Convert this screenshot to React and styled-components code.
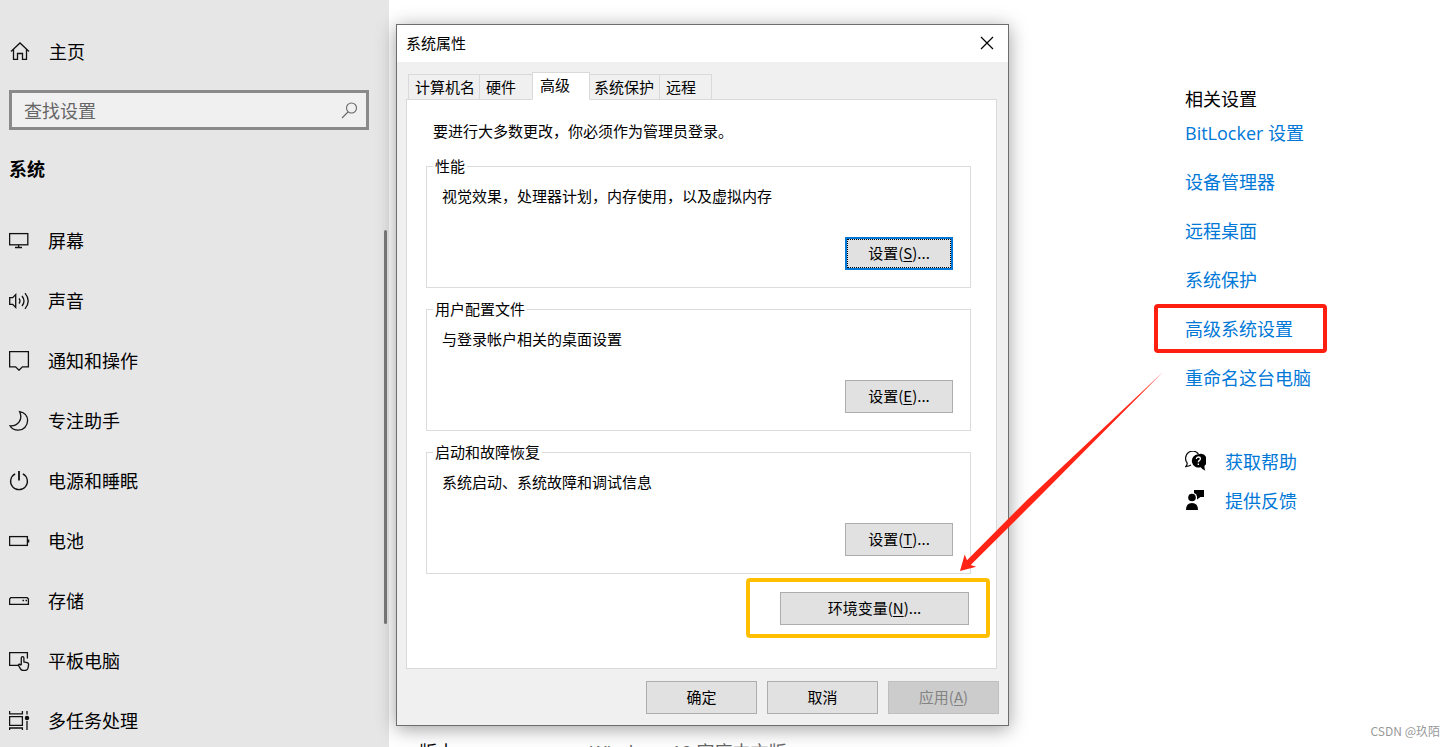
import React from "react";
import styled, { createGlobalStyle, css } from "styled-components";

const GlobalStyle = createGlobalStyle`
  * { box-sizing: border-box; }
  body {
    margin: 0;
    background: #fff;
    color: #000;
    font-family: "Noto Sans CJK SC", "Liberation Sans", sans-serif;
    font-size: 18px;
    line-height: 24px;
  }
  button, input { font-family: inherit; }
`;

const Desktop = styled.div`
  position: relative;
  display: flex;
  height: 100vh;
  overflow: hidden;
`;

/* ---------- Settings: left navigation ---------- */

const Sidebar = styled.aside`
  position: relative;
  display: flex;
  flex-direction: column;
  flex: none;
  width: 389px;
  padding: 31px 20px 0 9px;
  background: #e6e6e6;
  overflow: hidden;
`;

const HomeLink = styled.a`
  display: flex;
  align-items: center;
  flex: none;
  gap: 19px;
  height: 40px;
  color: #000;
  text-decoration: none;
`;

const SearchBox = styled.label`
  display: flex;
  align-items: center;
  flex: none;
  height: 40px;
  margin-top: 19px;
  padding: 0 6px 0 12px;
  border: 3px solid #8a8a8a;
  background: #f0f0f0;
`;

const SearchInput = styled.input`
  flex: 1;
  min-width: 0;
  padding: 0;
  border: 0;
  outline: 0;
  background: transparent;
  font-size: 18px;
  line-height: 24px;
  &::placeholder { color: #666; opacity: 1; }
`;

const SectionTitle = styled.h2`
  margin: 26px 0 30px;
  font-size: 18px;
  line-height: 24px;
  font-weight: 700;
`;

const NavList = styled.ul`
  margin: 0;
  padding: 0;
  list-style: none;
`;

const NavLink = styled.a`
  display: flex;
  align-items: center;
  gap: 18px;
  height: 60px;
  color: #000;
  text-decoration: none;
`;

const ScrollThumb = styled.div`
  position: absolute;
  top: 230px;
  right: 2px;
  width: 3px;
  height: 394px;
  border-radius: 2px;
  background: #7a7a7a;
`;

const Icon = styled.svg`
  flex: none;
  display: block;
  width: 21px;
  height: 22px;
  fill: none;
  stroke: ${(p) => p.$stroke || "#111"};
  stroke-width: ${(p) => p.$weight || 1.3};
`;

/* ---------- Settings: main page ---------- */

const Main = styled.main`
  flex: 1;
  display: flex;
  min-width: 0;
  font-family: "Open Sans", "Noto Sans CJK SC", sans-serif;
`;

const SpecColumn = styled.section`
  flex: none;
  display: flex;
  flex-direction: column;
  justify-content: flex-end;
  width: 796px;
  padding-left: 30px;
`;

const SpecRow = styled.dl`
  display: grid;
  grid-template-columns: 171px 1fr;
  margin: 0 0 -17px;
  dd { margin: 0; color: #666; }
`;

const Related = styled.aside`
  flex: 1;
  min-width: 0;
  padding-top: 87px;
`;

const RelatedTitle = styled.h3`
  margin: 0;
  font-size: 18px;
  line-height: 24px;
  font-weight: 400;
`;

const RelatedList = styled.ul`
  display: flex;
  flex-direction: column;
  gap: 25px;
  margin: 10px 0 0;
  padding: 0;
  list-style: none;
`;

const RelatedItem = styled.li`
  position: relative;
  height: 24px;
`;

const TextLink = styled.a`
  color: #0078d7;
  text-decoration: none;
`;

const HelpList = styled.ul`
  display: flex;
  flex-direction: column;
  gap: 15px;
  margin: 60px 0 0;
  padding: 0;
  list-style: none;
`;

const HelpItem = styled.li`
  display: flex;
  align-items: center;
  gap: 19px;
  height: 24px;
`;

/* ---------- Marks drawn over the windows ---------- */

const mark = css`
  position: absolute;
  border-radius: 4px;
  pointer-events: none;
`;

const RedMark = styled.div`
  ${mark}
  inset: -13px auto auto -31px;
  width: 173px;
  height: 49px;
  border: 4px solid #ff1f10;
`;

const YellowMark = styled.div`
  ${mark}
  inset: -14px -21px -13px -34px;
  border: 4px solid #ffbf00;
`;

const Arrow = styled.svg`
  position: absolute;
  left: 950px;
  top: 363px;
  width: 220px;
  height: 220px;
  pointer-events: none;
`;

/* ---------- System properties dialog ---------- */

const Dialog = styled.section`
  position: absolute;
  left: 396px;
  top: 24px;
  width: 613px;
  border: 1px solid #6d6d6d;
  background: #f0f0f0;
  box-shadow: 0 3px 18px rgba(0, 0, 0, 0.38);
  font-size: 15px;
  line-height: 20px;
`;

const TitleBar = styled.header`
  display: flex;
  align-items: center;
  justify-content: space-between;
  height: 37px;
  padding: 0 12px 2px 9px;
  background: #fff;
`;

const DialogTitle = styled.h1`
  margin: 0;
  font-size: 15px;
  line-height: 20px;
  font-weight: 400;
`;

const CloseButton = styled.button`
  display: flex;
  padding: 2px;
  border: 0;
  background: transparent;
  svg { width: 14px; height: 14px; }
`;

const DialogBody = styled.div`
  padding: 10px 11px 11px 9px;
`;

const Tabs = styled.div`
  display: flex;
  align-items: flex-end;
  height: 28px;
  margin-bottom: -1px;
  padding-left: 2px;
`;

const Tab = styled.button`
  width: ${(p) => p.$width}px;
  height: 26px;
  padding: 0 0 0 6px;
  border: 1px solid #d9d9d9;
  border-right: 0;
  background: #f0f0f0;
  color: #000;
  font-size: 15px;
  line-height: 20px;
  text-align: left;
  white-space: nowrap;
  ${(p) => p.$last && css`border-right: 1px solid #d9d9d9;`}
  ${(p) => p.$afterActive && css`
    padding-left: 4px;
    border-left: 0;
  `}
  ${(p) => p.$active && css`
    height: 28px;
    padding: 0 0 2px 7px;
    border-right: 1px solid #d9d9d9;
    border-bottom-color: #fff;
    background: #fff;
  `}
`;

const TabPanel = styled.div`
  height: 570px;
  padding: 21px 25px 0 19px;
  border: 1px solid #d9d9d9;
  background: #fff;
`;

const Notice = styled.p`
  margin: 0 0 15px 7px;
`;

const Groups = styled.div`
  display: flex;
  flex-direction: column;
  gap: 11px;
`;

const Group = styled.fieldset`
  height: 132px;
  min-width: 0;
  margin: 0;
  padding: 10px 17px 17px 15px;
  border: 1px solid #dcdcdc;
`;

const Legend = styled.legend`
  margin-left: -9px;
  padding: 0 2px;
  line-height: 20px;
`;

const GroupText = styled.p`
  margin: 0;
`;

const PushButton = styled.button`
  flex: none;
  width: ${(p) => p.$width}px;
  height: 33px;
  padding: 0 0 2px;
  border: 1px solid #adadad;
  background: #e1e1e1;
  color: #000;
  font-size: 15px;
  line-height: 20px;
  text-align: center;
  ${(p) => p.$focused && css`
    border: 2px solid #0078d7;
    outline: 1px dotted #000;
    outline-offset: -3px;
  `}
  &:disabled {
    border-color: #bfbfbf;
    background: #ccc;
    color: #838383;
  }
  u { text-underline-offset: 2px; }
`;

const GroupAction = styled.div`
  display: flex;
  justify-content: flex-end;
  margin-top: 31px;
`;

const EnvironmentRow = styled.div`
  display: flex;
  justify-content: flex-end;
  margin-top: 18px;
  padding-right: 2px;
`;

const EnvironmentWrap = styled.div`
  position: relative;
  display: flex;
`;

const DialogFooter = styled.footer`
  display: flex;
  justify-content: flex-end;
  gap: 10px;
  margin: 12px -2px 0 0;
`;

const Watermark = styled.small`
  position: absolute;
  right: 15px;
  bottom: 8px;
  color: #999;
  font-size: 12px;
  line-height: 16px;
`;

/* ---------- Icons ---------- */

const HomeIcon = () => (
  <Icon viewBox="0 0 21 22" aria-hidden="true">
    <path d="M2 11.5 L11 3 L20 11.5 M4.5 9.5 V19.4 H8.5 V13.5 H13.5 V19.4 H17.5 V9.5" />
  </Icon>
);

const SearchIcon = () => (
  <Icon viewBox="0 0 21 22" $stroke="#666" $weight={1.1} aria-hidden="true">
    <circle cx="12.5" cy="9" r="5" />
    <path d="M9 13 L3 19" />
  </Icon>
);

const navItems = [
  ["屏幕", <><rect x="0.6" y="3.6" width="18.2" height="11.2" /><path d="M9.6 15v2.6M6 17.5h7" /></>],
  ["声音", <><path d="M0.7 7.7h3L6.7 4.6v12.8L3.7 14.3h-3z" /><path d="M10 8.5q2 2.5 0 5M13 6q4 5 0 10M16 3.2q6.4 7.8 0 15.6" /></>],
  ["通知和操作", <path d="M0.6 1.6h18.8v15.2h-6L10 20.2l-3.4-3.4h-6z" />],
  ["专注助手", <path d="M10.6 1.6c5 1 8 4.6 8 9 0 5.4-4.2 9.6-9.4 9.6-3.8 0-6.8-1.7-8.2-4.4 8 .6 13.2-6.2 9.6-14.2z" />],
  ["电源和睡眠", <><path d="M6.2 3.8a8.4 8.4 0 1 0 7.6 0" /><path d="M10 1v9.5" strokeWidth="1.8" /></>],
  ["电池", <><rect x="0.6" y="6.6" width="17.8" height="8.8" /><path d="M19.4 9.5v3" strokeWidth="1.8" /></>],
  ["存储", <><path d="M1.8 7.6h16.4l1.2 1.4v5.4H.6V9z" /><path d="M13.5 10.5h1.5M16.5 10.5H18" /></>],
  ["平板电脑", <><path d="M9.5 15.4H.6V2.6h17.8v6" /><path d="M12.3 14.5V8a1.3 1.3 0 0 1 2.6 0v4l3.2.6q1.7.4 1.5 2l-.6 3.6q-.5 2.2-2.6 2.2h-2.5q-1.6 0-2.4-1.5l-2.2-3.8q.9-1.6 2.6-.2z" fill="#e6e6e6" /></>],
  ["多任务处理", <><path d="M.6 1v2.8h12.8V1M.6 6.6h12.8v8.8H.6zM.6 20v-2h12.8v2M18 1v3.5M18 11v9" /><circle cx="18" cy="8" r="1.6" fill="#111" /></>],
];

const relatedLinks = ["BitLocker 设置", "设备管理器", "远程桌面", "系统保护", "高级系统设置", "重命名这台电脑"];

const groups = [
  ["性能", "视觉效果，处理器计划，内存使用，以及虚拟内存", "S"],
  ["用户配置文件", "与登录帐户相关的桌面设置", "E"],
  ["启动和故障恢复", "系统启动、系统故障和调试信息", "T"],
];

export default function App() {
  return (
    <Desktop>
      <GlobalStyle />
      <Sidebar>
        <HomeLink href="#home"><HomeIcon />主页</HomeLink>
        <SearchBox>
          <SearchInput type="text" placeholder="查找设置" aria-label="查找设置" />
          <SearchIcon />
        </SearchBox>
        <SectionTitle>系统</SectionTitle>
        <NavList>
          {navItems.map(([label, art]) => (
            <li key={label}>
              <NavLink href="#nav">
                <Icon viewBox="0 -1 21 22" aria-hidden="true">{art}</Icon>
                {label}
              </NavLink>
            </li>
          ))}
        </NavList>
        <ScrollThumb />
      </Sidebar>

      <Main>
        <SpecColumn>
          <SpecRow>
            <dt>版本</dt>
            <dd>Windows 10 家庭中文版</dd>
          </SpecRow>
        </SpecColumn>
        <Related>
          <RelatedTitle>相关设置</RelatedTitle>
          <RelatedList>
            {relatedLinks.map((label) => (
              <RelatedItem key={label}>
                <TextLink href="#related">{label}</TextLink>
                {label === "高级系统设置" && <RedMark />}
              </RelatedItem>
            ))}
          </RelatedList>
          <HelpList>
            <HelpItem>
              <Icon viewBox="0 1 21 22" aria-hidden="true">
                <path d="M6 15 Q4 16.2 .8 16.6 Q2.6 14.5 2 12.6 A6.8 6.8 0 1 1 13.4 4" />
                <path d="M13.2 4.2a6.7 6.7 0 1 0 2.6 13q1.7 2.7 4.6 3.6-1.2-2.4-.9-5A6.7 6.7 0 0 0 13.2 4.2z" fill="#000" stroke="none" />
                <path d="M11.3 9q.2-2 2.1-2 2 0 2 1.800 0 1-1.200 1.800-.9.600-.9 1.700M13.300 13.500v1.400" stroke="#fff" strokeWidth="1.300" />
              </Icon>
              <TextLink href="#help">获取帮助</TextLink>
            </HelpItem>
            <HelpItem>
              <Icon viewBox="0 1 21 22" aria-hidden="true">
                <g fill="#000" stroke="none">
                  <circle cx="7" cy="8.500" r="3.800" />
                  <path d="M1 21q0-7 6-7t6 7z" />
                  <path d="M9 1h10v7h-3.500L12 10.500V7.500q-.3-2.700-3-3.500z" />
                </g>
              </Icon>
              <TextLink href="#feedback">提供反馈</TextLink>
            </HelpItem>
          </HelpList>
        </Related>
      </Main>

      <Dialog role="dialog" aria-labelledby="dialog-title">
        <TitleBar>
          <DialogTitle id="dialog-title">系统属性</DialogTitle>
          <CloseButton type="button" aria-label="关闭">
            <svg viewBox="0 0 14 14" stroke="#000" strokeWidth="1.200" aria-hidden="true">
              <path d="M1 1l12 12M13 1L1 13" />
            </svg>
          </CloseButton>
        </TitleBar>
        <DialogBody>
          <Tabs role="tablist">
            <Tab type="button" role="tab" $width={71}>计算机名</Tab>
            <Tab type="button" role="tab" $width={53}>硬件</Tab>
            <Tab type="button" role="tab" aria-selected="true" $width={58} $active>高级</Tab>
            <Tab type="button" role="tab" $width={69} $afterActive>系统保护</Tab>
            <Tab type="button" role="tab" $width={53} $last>远程</Tab>
          </Tabs>
          <TabPanel role="tabpanel">
            <Notice>要进行大多数更改，你必须作为管理员登录。</Notice>
            <Groups>
              {groups.map(([title, text, key], i) => (
                <Group key={key}>
                  <Legend>{title}</Legend>
                  <GroupText>{text}</GroupText>
                  <GroupAction>
                    <PushButton type="button" $width={108} $focused={i === 0}>
                      设置(<u>{key}</u>)...
                    </PushButton>
                  </GroupAction>
                </Group>
              ))}
            </Groups>
            <EnvironmentRow>
              <EnvironmentWrap>
                <PushButton type="button" $width={189}>环境变量(<u>N</u>)...</PushButton>
                <YellowMark />
              </EnvironmentWrap>
            </EnvironmentRow>
          </TabPanel>
          <DialogFooter>
            <PushButton type="button" $width={111}>确定</PushButton>
            <PushButton type="button" $width={111}>取消</PushButton>
            <PushButton type="button" $width={111} disabled>应用(<u>A</u>)</PushButton>
          </DialogFooter>
        </DialogBody>
      </Dialog>

      <Arrow viewBox="950 363 220 220" aria-hidden="true">
        <path d="M960 571 L964.700 554.500 L967 560.300 L1027 500 L1163 372 L1036 500 L970.700 565 L976.300 566.700 Z" fill="#ff2415" />
      </Arrow>
      <Watermark>CSDN @玖陌</Watermark>
    </Desktop>
  );
}
